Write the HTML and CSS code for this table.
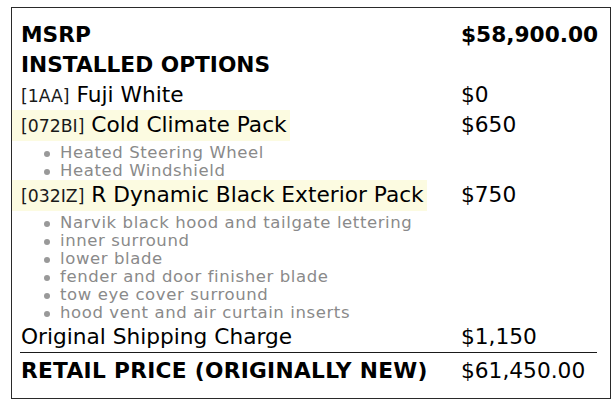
FILE: index.html
```html
<!DOCTYPE html>
<html>
<head>
<meta charset="utf-8">
<link rel="stylesheet" href="styles.css">
</head>
<body>
<div class="card">
  <div class="row strong">
    <div class="label">MSRP</div>
    <div class="price">$58,900.00</div>
  </div>
  <div class="row strong">
    <div class="label">INSTALLED OPTIONS</div>
    <div class="price"></div>
  </div>
  <div class="row">
    <div class="label"><span class="tag"><span class="code">[1AA]</span> Fuji White</span></div>
    <div class="price">$0</div>
  </div>
  <div class="row">
    <div class="label"><span class="tag hl"><span class="code">[072BI]</span> Cold Climate Pack</span></div>
    <div class="price">$650</div>
  </div>
  <ul class="features">
    <li>Heated Steering Wheel</li>
    <li>Heated Windshield</li>
  </ul>
  <div class="row">
    <div class="label"><span class="tag hl"><span class="code">[032IZ]</span> R Dynamic Black Exterior Pack</span></div>
    <div class="price">$750</div>
  </div>
  <ul class="features">
    <li>Narvik black hood and tailgate lettering</li>
    <li>inner surround</li>
    <li>lower blade</li>
    <li>fender and door finisher blade</li>
    <li>tow eye cover surround</li>
    <li>hood vent and air curtain inserts</li>
  </ul>
  <div class="row">
    <div class="label">Original Shipping Charge</div>
    <div class="price">$1,150</div>
  </div>
  <div class="row total">
    <div class="label">RETAIL PRICE (ORIGINALLY NEW)</div>
    <div class="price">$61,450.00</div>
  </div>
</div>
</body>
</html>
```
FILE: styles.css
```css
html, body {
  margin: 0;
  padding: 0;
  background: #ffffff;
}

body {
  font-family: "DejaVu Sans", sans-serif;
  color: #000;
}

.card {
  box-sizing: border-box;
  width: 600px;
  height: 392px;
  margin: 7px 0 0 11px;
  border: 1px solid #2a2a2a;
  padding: 12px 12px 0 9px;
}

.row {
  display: grid;
  grid-template-columns: 440px 136px;
  height: 30px;
  line-height: 30px;
  font-size: 21.7px;
  white-space: nowrap;
}

.strong {
  font-weight: bold;
}

.tag {
  display: inline-block;
  margin-left: -9px;
  padding: 0 3px 0 9px;
}

.hl {
  background: #fcfbe1;
}

.code {
  font-size: 17.3px;
  color: #1a1a1a;
}

.features {
  list-style: none;
  margin: 0;
  padding: 4px 0 0 23px;
  font-size: 16.5px;
  letter-spacing: 0.6px;
  line-height: 18px;
  color: #8a8a8a;
}

.features li {
  display: flex;
  align-items: center;
  height: 18px;
  white-space: nowrap;
}

.features li::before {
  content: "";
  width: 6px;
  height: 6px;
  border-radius: 50%;
  background: #999;
  margin: 2px 10px 0 0;
  flex: none;
}

.total {
  box-sizing: border-box;
  height: 34px;
  padding: 3px 0 0 1px;
  border-top: 1px solid #1a1a1a;
  margin-left: -1px;
  width: 577px;
}

.total .label {
  font-weight: bold;
  letter-spacing: 0.3px;
}
```
